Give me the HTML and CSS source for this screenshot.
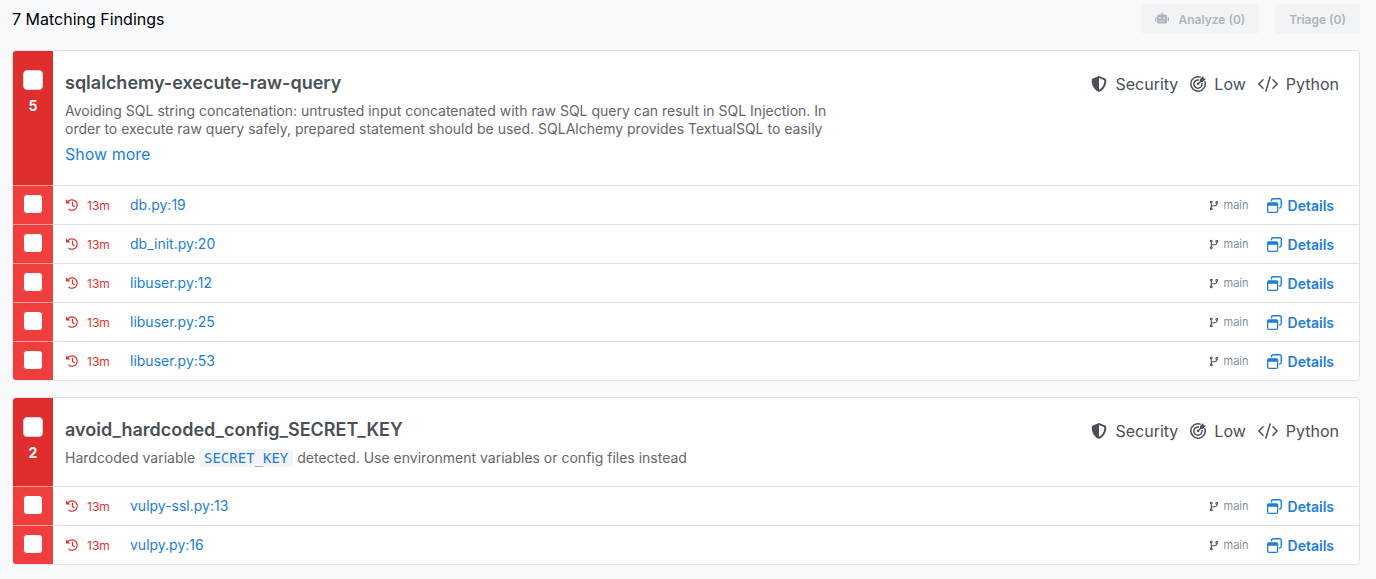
FILE: index.html
```html
<!DOCTYPE html>
<html lang="en">
<head>
<meta charset="utf-8">
<meta name="viewport" content="width=device-width, initial-scale=1">
<title>Findings</title>
<link rel="stylesheet" href="styles.css">
</head>
<body>
<svg class="sprite" aria-hidden="true">
  <symbol id="robot" viewBox="0 0 640 512"><path fill="currentColor" fill-rule="evenodd" d="M32 224h32v192H32a32 32 0 0 1-32-32V256a32 32 0 0 1 32-32zm512-48v272a64 64 0 0 1-64 64H160a64 64 0 0 1-64-64V176a80 80 0 0 1 80-80h112V32a32 32 0 0 1 64 0v64h112a80 80 0 0 1 80 80zM264 256a40 40 0 1 0-80 0 40 40 0 0 0 80 0zm-8 128h-64v32h64zm96 0h-64v32h64zm104-128a40 40 0 1 0-80 0 40 40 0 0 0 80 0zm-8 128h-64v32h64zm192-128v128a32 32 0 0 1-32 32h-32V224h32a32 32 0 0 1 32 32z"/></symbol>
  <symbol id="shield" viewBox="0 0 16 16"><path fill="currentColor" fill-rule="evenodd" d="M8 0l6.200 2.600c.7.300 1.100.9 1.100 1.600 0 4-1.600 9.400-7.300 11.800C2.300 13.600.7 8.200.7 4.200c0-.7.4-1.300 1.100-1.600zM8 2.100v11.700c4.200-2 5.300-6.100 5.300-9.500z"/></symbol>
  <symbol id="target" viewBox="0 0 16 16"><g fill="none" stroke="currentColor" stroke-width="1.500" stroke-linecap="round"><path d="M10.200 1.100A7.200 7.200 0 1 0 14.900 5.800"/><path d="M8.600 4A4.100 4.100 0 1 0 12 7.400"/><path d="M8 8l3.500-3.500"/></g><path fill="currentColor" d="M10 3.200L13.100.1l.6 2.200 2.200.6-3.100 3.100h-2.800z"/><circle cx="8" cy="8" r="1.200" fill="currentColor"/></symbol>
  <symbol id="code" viewBox="0 0 20 16"><path fill="none" stroke="currentColor" stroke-width="1.500" stroke-linecap="round" stroke-linejoin="round" d="M5 3.800L.9 8 5 12.200M15 3.800L19.100 8 15 12.200M12.100 1L7.900 15"/></symbol>
  <symbol id="history" viewBox="0 0 14 14"><g fill="none" stroke="currentColor" stroke-width="1.200" stroke-linecap="round" stroke-linejoin="round"><path d="M2.600 4.300A5.200 5.200 0 1 1 3.900 11.200"/><path d="M7.500 4.200v3l1.800 1.500"/></g><path fill="currentColor" d="M1 1.200v4.200h4.200z"/></symbol>
  <symbol id="branch" viewBox="0 0 10 12"><g fill="none" stroke="currentColor" stroke-width="1.100"><circle cx="2" cy="2.300" r="1"/><circle cx="2" cy="9.700" r="1"/><circle cx="8" cy="2.700" r="1"/><path d="M2 3.300v5.400M8 3.700v.7A1.800 1.800 0 0 1 6.200 6.200H3.800A1.800 1.800 0 0 0 2 8"/></g></symbol>
  <symbol id="windows" viewBox="0 0 14 14"><path fill="none" stroke="currentColor" stroke-width="1.300" stroke-linecap="round" d="M4.200 2.600v-.4A1.500 1.500 0 0 1 5.700.7h6.100A1.500 1.500 0 0 1 13.300 2.200v5.600a1.500 1.500 0 0 1-1.500 1.500"/><path fill="currentColor" fill-rule="evenodd" d="M1.600 4h7.300a1.600 1.600 0 0 1 1.600 1.600v6.800A1.600 1.600 0 0 1 8.900 14H1.600A1.600 1.600 0 0 1 0 12.400V5.600A1.600 1.600 0 0 1 1.600 4zM1.200 7.200v5.200c0 .2.100.4.400.4h7.300c.2 0 .4-.1.400-.4V7.200z"/></symbol>
</svg>
<main class="page">
  <header class="toolbar">
    <h1 class="count">7 Matching Findings</h1>
    <div class="actions">
      <button class="btn" type="button" disabled><svg class="icon-robot"><use href="#robot"/></svg>Analyze (0)</button>
      <button class="btn" type="button" disabled>Triage (0)</button>
    </div>
  </header>

  <section class="card">
    <div class="rule">
      <label class="rail"><input class="check check-lg" type="checkbox" aria-label="Select all sqlalchemy-execute-raw-query"><span>5</span></label>
      <div class="rule-body">
        <div class="rule-text">
          <h2 class="rule-name">sqlalchemy-execute-raw-query</h2>
          <p class="desc">Avoiding SQL string concatenation: untrusted input concatenated with raw SQL query can result in SQL Injection. In order to execute raw query safely, prepared statement should be used. SQLAlchemy provides TextualSQL to easily</p>
          <a class="more" href="#">Show more</a>
        </div>
        <ul class="tags">
          <li><svg class="icon-tag"><use href="#shield"/></svg>Security</li>
          <li><svg class="icon-tag"><use href="#target"/></svg>Low</li>
          <li><svg class="icon-code"><use href="#code"/></svg>Python</li>
        </ul>
      </div>
    </div>
    <div class="row">
      <div class="rail"><input class="check" type="checkbox" aria-label="Select db.py:19"></div>
      <div class="row-body"><span class="age"><svg class="icon-age"><use href="#history"/></svg>13m</span><a class="file" href="#">db.py:19</a><span class="branch"><svg class="icon-branch"><use href="#branch"/></svg>main</span><button class="details" type="button"><svg class="icon-details"><use href="#windows"/></svg>Details</button></div>
    </div>
    <div class="row">
      <div class="rail"><input class="check" type="checkbox" aria-label="Select db_init.py:20"></div>
      <div class="row-body"><span class="age"><svg class="icon-age"><use href="#history"/></svg>13m</span><a class="file" href="#">db_init.py:20</a><span class="branch"><svg class="icon-branch"><use href="#branch"/></svg>main</span><button class="details" type="button"><svg class="icon-details"><use href="#windows"/></svg>Details</button></div>
    </div>
    <div class="row">
      <div class="rail"><input class="check" type="checkbox" aria-label="Select libuser.py:12"></div>
      <div class="row-body"><span class="age"><svg class="icon-age"><use href="#history"/></svg>13m</span><a class="file" href="#">libuser.py:12</a><span class="branch"><svg class="icon-branch"><use href="#branch"/></svg>main</span><button class="details" type="button"><svg class="icon-details"><use href="#windows"/></svg>Details</button></div>
    </div>
    <div class="row">
      <div class="rail"><input class="check" type="checkbox" aria-label="Select libuser.py:25"></div>
      <div class="row-body"><span class="age"><svg class="icon-age"><use href="#history"/></svg>13m</span><a class="file" href="#">libuser.py:25</a><span class="branch"><svg class="icon-branch"><use href="#branch"/></svg>main</span><button class="details" type="button"><svg class="icon-details"><use href="#windows"/></svg>Details</button></div>
    </div>
    <div class="row">
      <div class="rail"><input class="check" type="checkbox" aria-label="Select libuser.py:53"></div>
      <div class="row-body"><span class="age"><svg class="icon-age"><use href="#history"/></svg>13m</span><a class="file" href="#">libuser.py:53</a><span class="branch"><svg class="icon-branch"><use href="#branch"/></svg>main</span><button class="details" type="button"><svg class="icon-details"><use href="#windows"/></svg>Details</button></div>
    </div>
  </section>

  <section class="card">
    <div class="rule">
      <label class="rail"><input class="check check-lg" type="checkbox" aria-label="Select all avoid_hardcoded_config_SECRET_KEY"><span>2</span></label>
      <div class="rule-body">
        <div class="rule-text">
          <h2 class="rule-name">avoid_hardcoded_config_SECRET_KEY</h2>
          <p class="desc">Hardcoded variable <code class="code">SECRET_KEY</code> detected. Use environment variables or config files instead</p>
        </div>
        <ul class="tags">
          <li><svg class="icon-tag"><use href="#shield"/></svg>Security</li>
          <li><svg class="icon-tag"><use href="#target"/></svg>Low</li>
          <li><svg class="icon-code"><use href="#code"/></svg>Python</li>
        </ul>
      </div>
    </div>
    <div class="row">
      <div class="rail"><input class="check" type="checkbox" aria-label="Select vulpy-ssl.py:13"></div>
      <div class="row-body"><span class="age"><svg class="icon-age"><use href="#history"/></svg>13m</span><a class="file" href="#">vulpy-ssl.py:13</a><span class="branch"><svg class="icon-branch"><use href="#branch"/></svg>main</span><button class="details" type="button"><svg class="icon-details"><use href="#windows"/></svg>Details</button></div>
    </div>
    <div class="row">
      <div class="rail"><input class="check" type="checkbox" aria-label="Select vulpy.py:16"></div>
      <div class="row-body"><span class="age"><svg class="icon-age"><use href="#history"/></svg>13m</span><a class="file" href="#">vulpy.py:16</a><span class="branch"><svg class="icon-branch"><use href="#branch"/></svg>main</span><button class="details" type="button"><svg class="icon-details"><use href="#windows"/></svg>Details</button></div>
    </div>
  </section>
</main>
</body>
</html>
```
FILE: styles.css
```css
* { box-sizing: border-box; }
body {
  margin: 0;
  background: #f8f9fb;
  color: #000;
  font-family: Inter, "Liberation Sans", sans-serif;
  font-size: 16px;
}
h1, h2, p, ul { margin: 0; padding: 0; }
a { color: #1c7ed6; text-decoration: none; }
button { font-family: inherit; }
.sprite { display: none; }

.page {
  display: flex;
  flex-direction: column;
  gap: 16px;
  padding: 4px 16px 14px 12px;
}
.toolbar {
  display: flex;
  align-items: center;
  justify-content: space-between;
}
.count { font-size: 16px; font-weight: 400; line-height: 30px; }
.actions { display: flex; gap: 16px; }
.btn {
  display: flex;
  align-items: center;
  gap: 10px;
  height: 30px;
  padding: 0 14px;
  border: 0;
  border-radius: 4px;
  background: #f1f3f5;
  color: #adb5bd;
  font-size: 12px;
  font-weight: 600;
}
.icon-robot { width: 14px; height: 12px; margin-bottom: 2px; }

.card {
  overflow: hidden;
  border: 1px solid #dee2e6;
  border-radius: 4px;
  background: #fff;
}
.rule, .row { display: flex; }
.rail {
  display: flex;
  flex: none;
  flex-direction: column;
  align-items: center;
  gap: 7px;
  width: 40px;
  color: #fff;
}
.rule .rail {
  padding-top: 19px;
  background: #e02d2d;
  font-size: 14px;
  font-weight: 700;
  line-height: 18px;
}
.row .rail {
  justify-content: center;
  padding-bottom: 2px;
  border-top: 1px solid #f7a0a3;
  background: #f03e3e;
}
.check {
  width: 20px;
  height: 20px;
  margin: 0;
  appearance: none;
  border: 1px solid #f03e3e;
  border-radius: 4px;
  background: #fff;
}
.check-lg { border-color: #ced4da; }

.rule-body {
  display: flex;
  flex: 1;
  justify-content: space-between;
  align-items: flex-start;
  padding: 19px 20px 19px 12px;
}
.rule-text { max-width: 770px; }
.rule-name {
  color: #495057;
  font-size: 18px;
  font-weight: 600;
  line-height: 26px;
}
.desc {
  padding-top: 6px;
  color: #666;
  font-size: 14px;
  line-height: 18px;
}
.code {
  padding: 1px 5px;
  border-radius: 4px;
  background: #f1f3f5;
  color: #1c7ed6;
  font-family: "DejaVu Sans Mono", monospace;
  font-size: 14px;
  line-height: 16px;
}
.more { display: block; padding-top: 4px; line-height: 24px; }
.tags {
  display: flex;
  gap: 12px;
  color: #495057;
  line-height: 28px;
  list-style: none;
}
.tags li { display: flex; align-items: center; gap: 8px; }
.icon-tag { width: 16px; height: 16px; }
.icon-code { width: 20px; height: 16px; }

.row { height: 39px; }
.row-body {
  display: flex;
  flex: 1;
  align-items: center;
  padding: 0 25px 0 12px;
  border-top: 1px solid #dee2e6;
}
.age {
  display: flex;
  align-items: center;
  gap: 8px;
  width: 65px;
  color: #e03131;
  font-size: 12px;
}
.icon-age { width: 14px; height: 14px; }
.file { flex: 1; padding-bottom: 2px; font-size: 14px; }
.branch {
  display: flex;
  align-items: center;
  gap: 5px;
  margin-right: 18px;
  color: #868e96;
  font-size: 11px;
}
.icon-branch { width: 10px; height: 11px; color: #495057; }
.details {
  display: flex;
  align-items: center;
  gap: 6px;
  padding: 0;
  border: 0;
  background: none;
  color: #1c7ed6;
  font-size: 14px;
  font-weight: 600;
}
.icon-details { width: 15px; height: 15px; }
```
